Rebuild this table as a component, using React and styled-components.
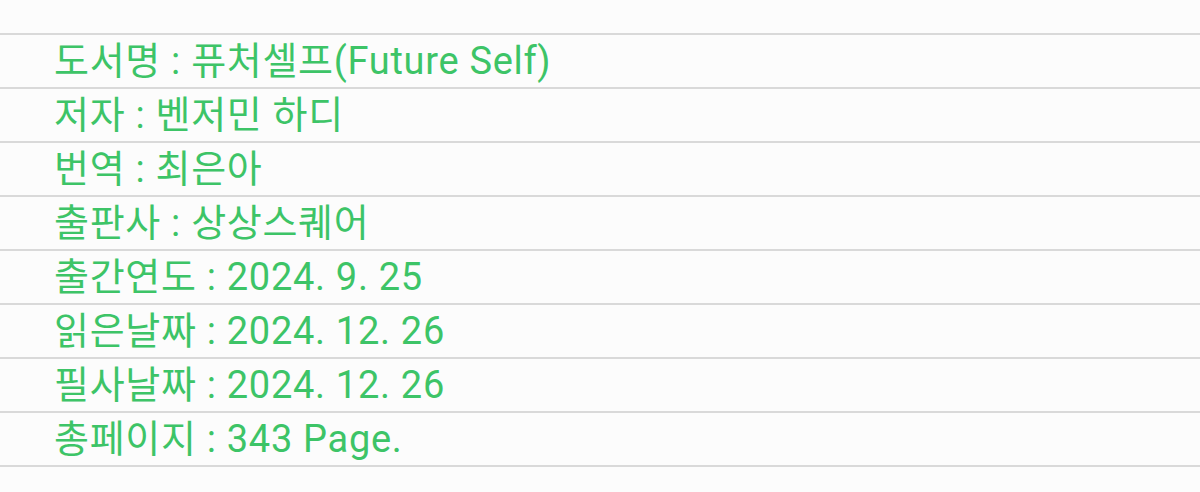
import React from "react";
import styled, { createGlobalStyle } from "styled-components";

const GlobalStyle = createGlobalStyle`
  html, body {
    margin: 0;
    padding: 0;
    background: #fcfcfc;
  }
`;

const Page = styled.div`
  width: 1200px;
  height: 492px;
  padding-top: 33px;
  box-sizing: border-box;
  background: #fcfcfc;
  font-family: Roboto, "Noto Sans CJK KR", sans-serif;
`;

const List = styled.ul`
  list-style: none;
  margin: 0;
  padding: 0;
  border-top: 2px solid #d9d9d9;
`;

const Row = styled.li`
  height: 52px;
  display: flex;
  align-items: center;
  padding-left: 54px;
  border-bottom: 2px solid #d9d9d9;
  color: #3dc467;
  font-size: 38px;
  line-height: 1;
  letter-spacing: 0.7px;
`;

const info = [
  "도서명 : 퓨처셀프(Future Self)",
  "저자 : 벤저민 하디",
  "번역 : 최은아",
  "출판사 : 상상스퀘어",
  "출간연도 : 2024. 9. 25",
  "읽은날짜 : 2024. 12. 26",
  "필사날짜 : 2024. 12. 26",
  "총페이지 : 343 Page.",
];

export default function App() {
  return (
    <>
      <GlobalStyle />
      <Page>
        <List>
          {info.map((line) => (
            <Row key={line}>{line}</Row>
          ))}
        </List>
      </Page>
    </>
  );
}
